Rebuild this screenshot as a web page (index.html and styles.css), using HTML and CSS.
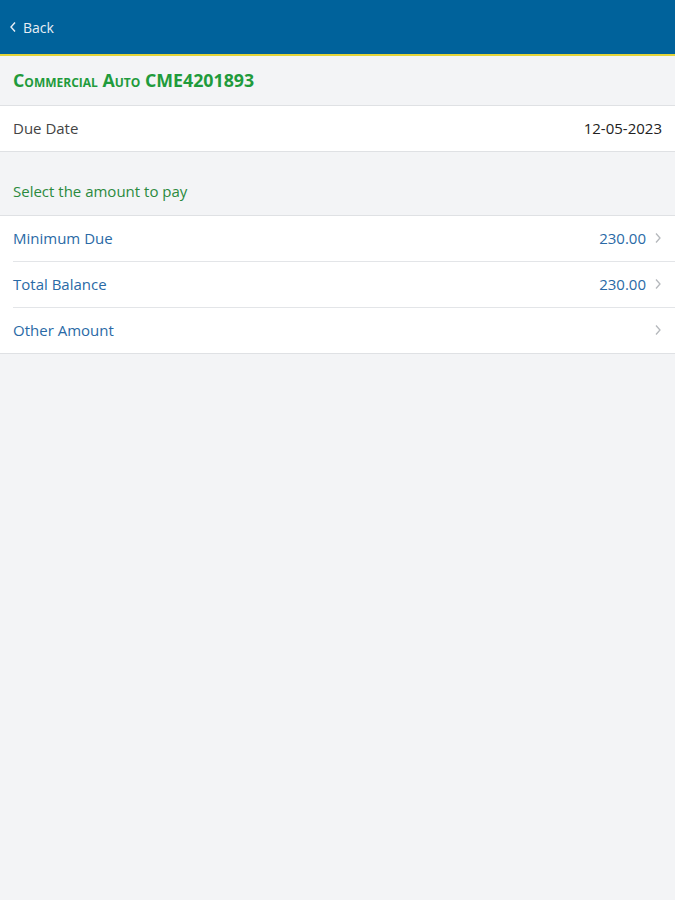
FILE: index.html
```html
<!DOCTYPE html>
<html>
<head>
<meta charset="utf-8">
<link rel="stylesheet" href="styles.css">
</head>
<body>
<header class="topbar">
  <a class="back">
    <svg class="back-icon" width="8" height="12" viewBox="0 0 8 12"><path d="M6 1.5 L2 6 L6 10.5" fill="none" stroke="#e8eef5" stroke-width="1.4"/></svg>
    <span>Back</span>
  </a>
</header>
<div class="title-bar">
  <h1 class="title">Commercial Auto CME4201893</h1>
</div>
<div class="list">
  <div class="row">
    <span class="label">Due Date</span>
    <span class="value">12-05-2023</span>
  </div>
</div>
<div class="section-head">Select the amount to pay</div>
<div class="list">
  <div class="row link">
    <span class="label">Minimum Due</span>
    <span class="value">230.00</span>
    <svg class="chev" width="8" height="12" viewBox="0 0 8 12"><path d="M2 1.5 L6 6 L2 10.5" fill="none" stroke="#b5b8bc" stroke-width="1.3"/></svg>
  </div>
  <div class="row link">
    <span class="label">Total Balance</span>
    <span class="value">230.00</span>
    <svg class="chev" width="8" height="12" viewBox="0 0 8 12"><path d="M2 1.5 L6 6 L2 10.5" fill="none" stroke="#b5b8bc" stroke-width="1.3"/></svg>
  </div>
  <div class="row link">
    <span class="label">Other Amount</span>
    <span class="value"></span>
    <svg class="chev" width="8" height="12" viewBox="0 0 8 12"><path d="M2 1.5 L6 6 L2 10.5" fill="none" stroke="#b5b8bc" stroke-width="1.3"/></svg>
  </div>
</div>
</body>
</html>
```
FILE: styles.css
```css
html, body {
  margin: 0;
  padding: 0;
  background: #f3f4f6;
  font-family: "Open Sans", "Noto Sans", sans-serif;
  height: 100%;
}
.topbar {
  height: 54px;
  background: #00629b;
  border-bottom: 2px solid #e3d43a;
  display: flex;
  align-items: center;
  padding-left: 9px;
  box-sizing: content-box;
}
.back {
  display: flex;
  align-items: center;
  gap: 6px;
  color: #e8eef5;
  font-size: 14px;
}
.title-bar {
  height: 49px;
  display: flex;
  align-items: center;
  padding: 0 13px;
  border-bottom: 1px solid #dfe1e4;
}
.title {
  margin: 0;
  margin-top: -2px;
  font-size: 17.8px;
  font-weight: 700;
  font-variant: small-caps;
  color: #1f9b3c;
  letter-spacing: 0;
}
.list {
  background: #fff;
  border-bottom: 1px solid #dfe1e4;
}
.row {
  height: 45px;
  box-sizing: border-box;
  padding-bottom: 2px;
  display: flex;
  align-items: center;
  margin-left: 13px;
  padding-right: 13px;
  font-size: 15px;
  color: #444;
}
.row + .row {
  border-top: 1px solid #e3e5e8;
  height: 46px;
}
.label { flex: 1; }
.value { color: #222; }
.link .label, .link .value { color: #2a6aa6; }
.chev { margin-left: 8px; margin-right: 0; }
.section-head {
  height: 64px;
  box-sizing: border-box;
  padding: 29px 13px 0;
  font-size: 15px;
  color: #2b8a3e;
  border-bottom: 1px solid #dfe1e4;
}
```
